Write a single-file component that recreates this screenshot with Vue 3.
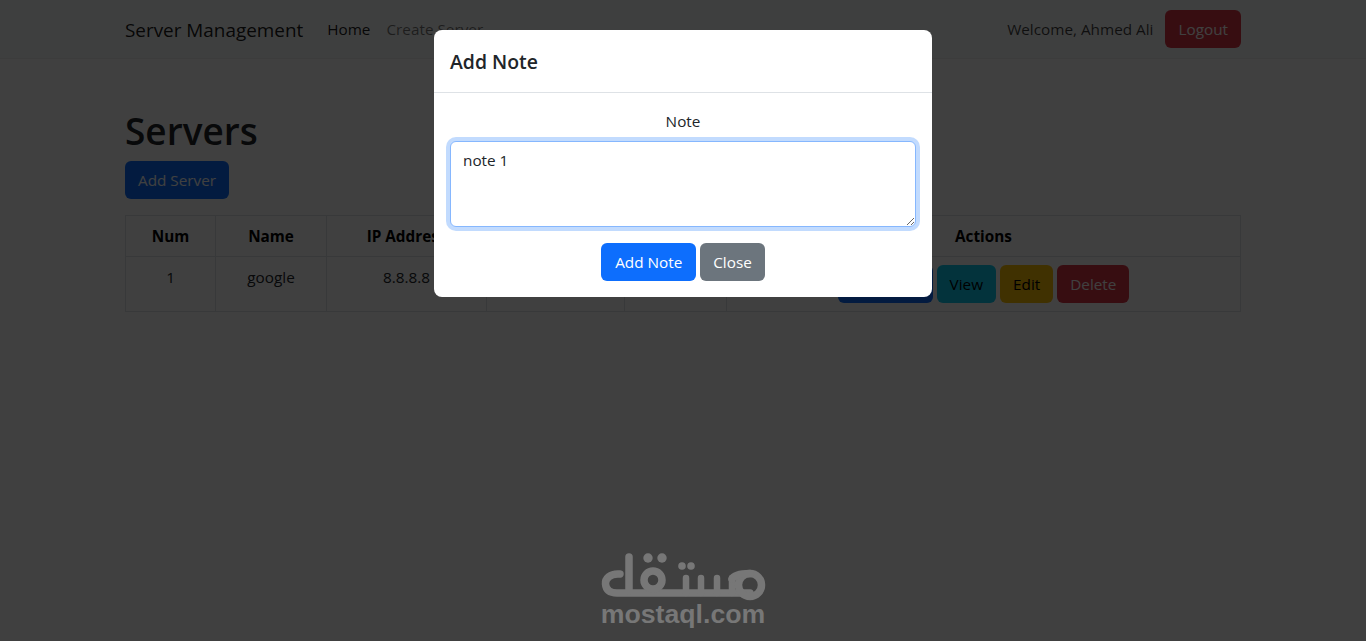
<script setup>
const columns = ['Num', 'Name', 'IP Address', '', '', 'Actions']
const widths = [90, 111, 160, 138, 102, 514]
const actions = [
  { label: 'Add Note', kind: 'primary wide' },
  { label: 'View', kind: 'info' },
  { label: 'Edit', kind: 'warning' },
  { label: 'Delete', kind: 'danger' }
]
</script>

<template>
  <div class="page">
    <nav class="navbar">
      <div class="wrap nav-inner">
        <a class="brand">Server Management</a>
        <a class="nav-link active">Home</a>
        <a class="nav-link">Create Server</a>
        <span class="welcome">Welcome, Ahmed Ali</span>
        <button class="btn danger">Logout</button>
      </div>
    </nav>

    <main class="wrap content">
      <h1>Servers</h1>
      <button class="btn primary">Add Server</button>
      <table>
        <colgroup>
          <col v-for="(w, i) in widths" :key="i" :style="{ width: w + 'px' }" />
        </colgroup>
        <thead>
          <tr><th v-for="(c, i) in columns" :key="i">{{ c }}</th></tr>
        </thead>
        <tbody>
          <tr>
            <td>1</td>
            <td>google</td>
            <td>8.8.8.8</td>
            <td></td>
            <td></td>
            <td>
              <div class="actions">
                <button v-for="a in actions" :key="a.label" class="btn" :class="a.kind">{{ a.label }}</button>
              </div>
            </td>
          </tr>
        </tbody>
      </table>
    </main>

    <div class="backdrop"></div>

    <div class="logo">
      <svg width="166" height="52" viewBox="0 0 166 52" fill="none" stroke="#777" stroke-width="7.5" stroke-linecap="round" stroke-linejoin="round">
        <path d="M20 23C10 22 5 28 5.5 33C6 39 10 42 17 42H150" />
        <path d="M29 6V40" />
        <circle cx="53" cy="29" r="9" />
        <path d="M86 27V42M101 27V42M117 27V42M132 27V42" stroke-width="6.5" />
        <circle cx="150" cy="34" r="11.5" />
        <path d="M132 28C134 24 140 22.5 150 22.5" />
        <g fill="#777" stroke="none">
          <circle cx="48" cy="7" r="4.7" />
          <circle cx="62" cy="7" r="4.7" />
          <circle cx="82" cy="15" r="3.8" />
          <circle cx="91" cy="15" r="3.8" />
        </g>
      </svg>
      <span class="logo-text">mostaql.com</span>
    </div>

    <div class="modal">
      <header class="modal-header"><h5>Add Note</h5></header>
      <div class="modal-body">
        <label class="note-label" for="note">Note</label>
        <textarea id="note" class="note-input">note 1</textarea>
        <div class="modal-actions">
          <button class="btn bright wide">Add Note</button>
          <button class="btn secondary">Close</button>
        </div>
      </div>
    </div>
  </div>
</template>

<style>
html, body { margin: 0; background: #fff; }
</style>

<style scoped>
.page {
  position: relative;
  height: 641px;
  overflow: hidden;
  background: #fff;
  font-family: "Open Sans", "Noto Sans", sans-serif;
  font-size: 15.3px;
  line-height: 24px;
  color: #212529;
}
.wrap { width: 1116px; margin: 0 auto; }
.navbar { background: #f8f9fa; height: 58px; border-bottom: 1px solid #eee; }
.nav-inner { display: flex; align-items: center; height: 58px; }
.brand { font-size: 18.9px; margin-right: 24px; padding-top: 2px; color: rgba(0,0,0,.9); }
.nav-link { margin-right: 16px; color: rgba(0,0,0,.55); }
.nav-link.active { color: rgba(0,0,0,.9); }
.welcome { margin-left: auto; margin-right: 12px; color: rgba(0,0,0,.75); }
.btn {
  height: 38px;
  padding: 0 12px;
  border: 1px solid transparent;
  border-radius: 6px;
  font: inherit;
  color: #fff;
  white-space: nowrap;
}
.wide { min-width: 95px; }
.primary { background: #0d6efd; }
.bright { background: #0d6efd; }
.info { background: #0dcaf0; color: #000; }
.warning { background: #ffc107; color: #000; }
.danger { background: #dc3545; }
.secondary { background: #6c757d; }
.content { padding-top: 48px; }
h1 { margin: 0 0 6px; font-size: 37px; line-height: 48px; font-weight: 600; color: #212529; }
table { margin-top: 16px; width: 1115px; border-collapse: collapse; table-layout: fixed; text-align: center; }
th, td { border: 1px solid #dee2e6; padding: 8px; vertical-align: top; }
th { font-weight: 700; color: #000; height: 24px; }
.actions { display: flex; justify-content: center; gap: 4px; }
.backdrop { position: absolute; inset: 0; background: rgba(0,0,0,.75); }
.logo { position: absolute; left: 600px; top: 551px; width: 166px; height: 78px; }
.logo svg { display: block; }
.logo-text {
  position: absolute; left: 0; top: 48px; width: 166px; text-align: center;
  font-family: "Liberation Sans", sans-serif; font-weight: 700; font-size: 26.7px; line-height: 30px; color: #777;
}
.modal {
  position: absolute; left: 434px; top: 30px; width: 498px; height: 267px;
  background: #fff; border-radius: 8px; overflow: hidden;
}
.modal-header { height: 63px; border-bottom: 1px solid #dee2e6; padding: 2px 16px 0; box-sizing: border-box; display: flex; align-items: center; }
h5 { margin: 0; font-size: 19.4px; font-weight: 600; line-height: 24px; color: #212529; }
.modal-body { padding: 16px; display: flex; flex-direction: column; }
.note-label { text-align: center; height: 24px; margin-bottom: 8px; }
.note-input {
  box-sizing: border-box; width: 466px; height: 86px; padding: 6px 12px;
  border: 1px solid #86b7fe; border-radius: 6px; outline: none;
  box-shadow: 0 0 0 4px rgba(13,110,253,.25);
  font: inherit; color: #212529;
}
.modal-actions { display: flex; justify-content: center; gap: 4px; margin-top: 16px; }
</style>
